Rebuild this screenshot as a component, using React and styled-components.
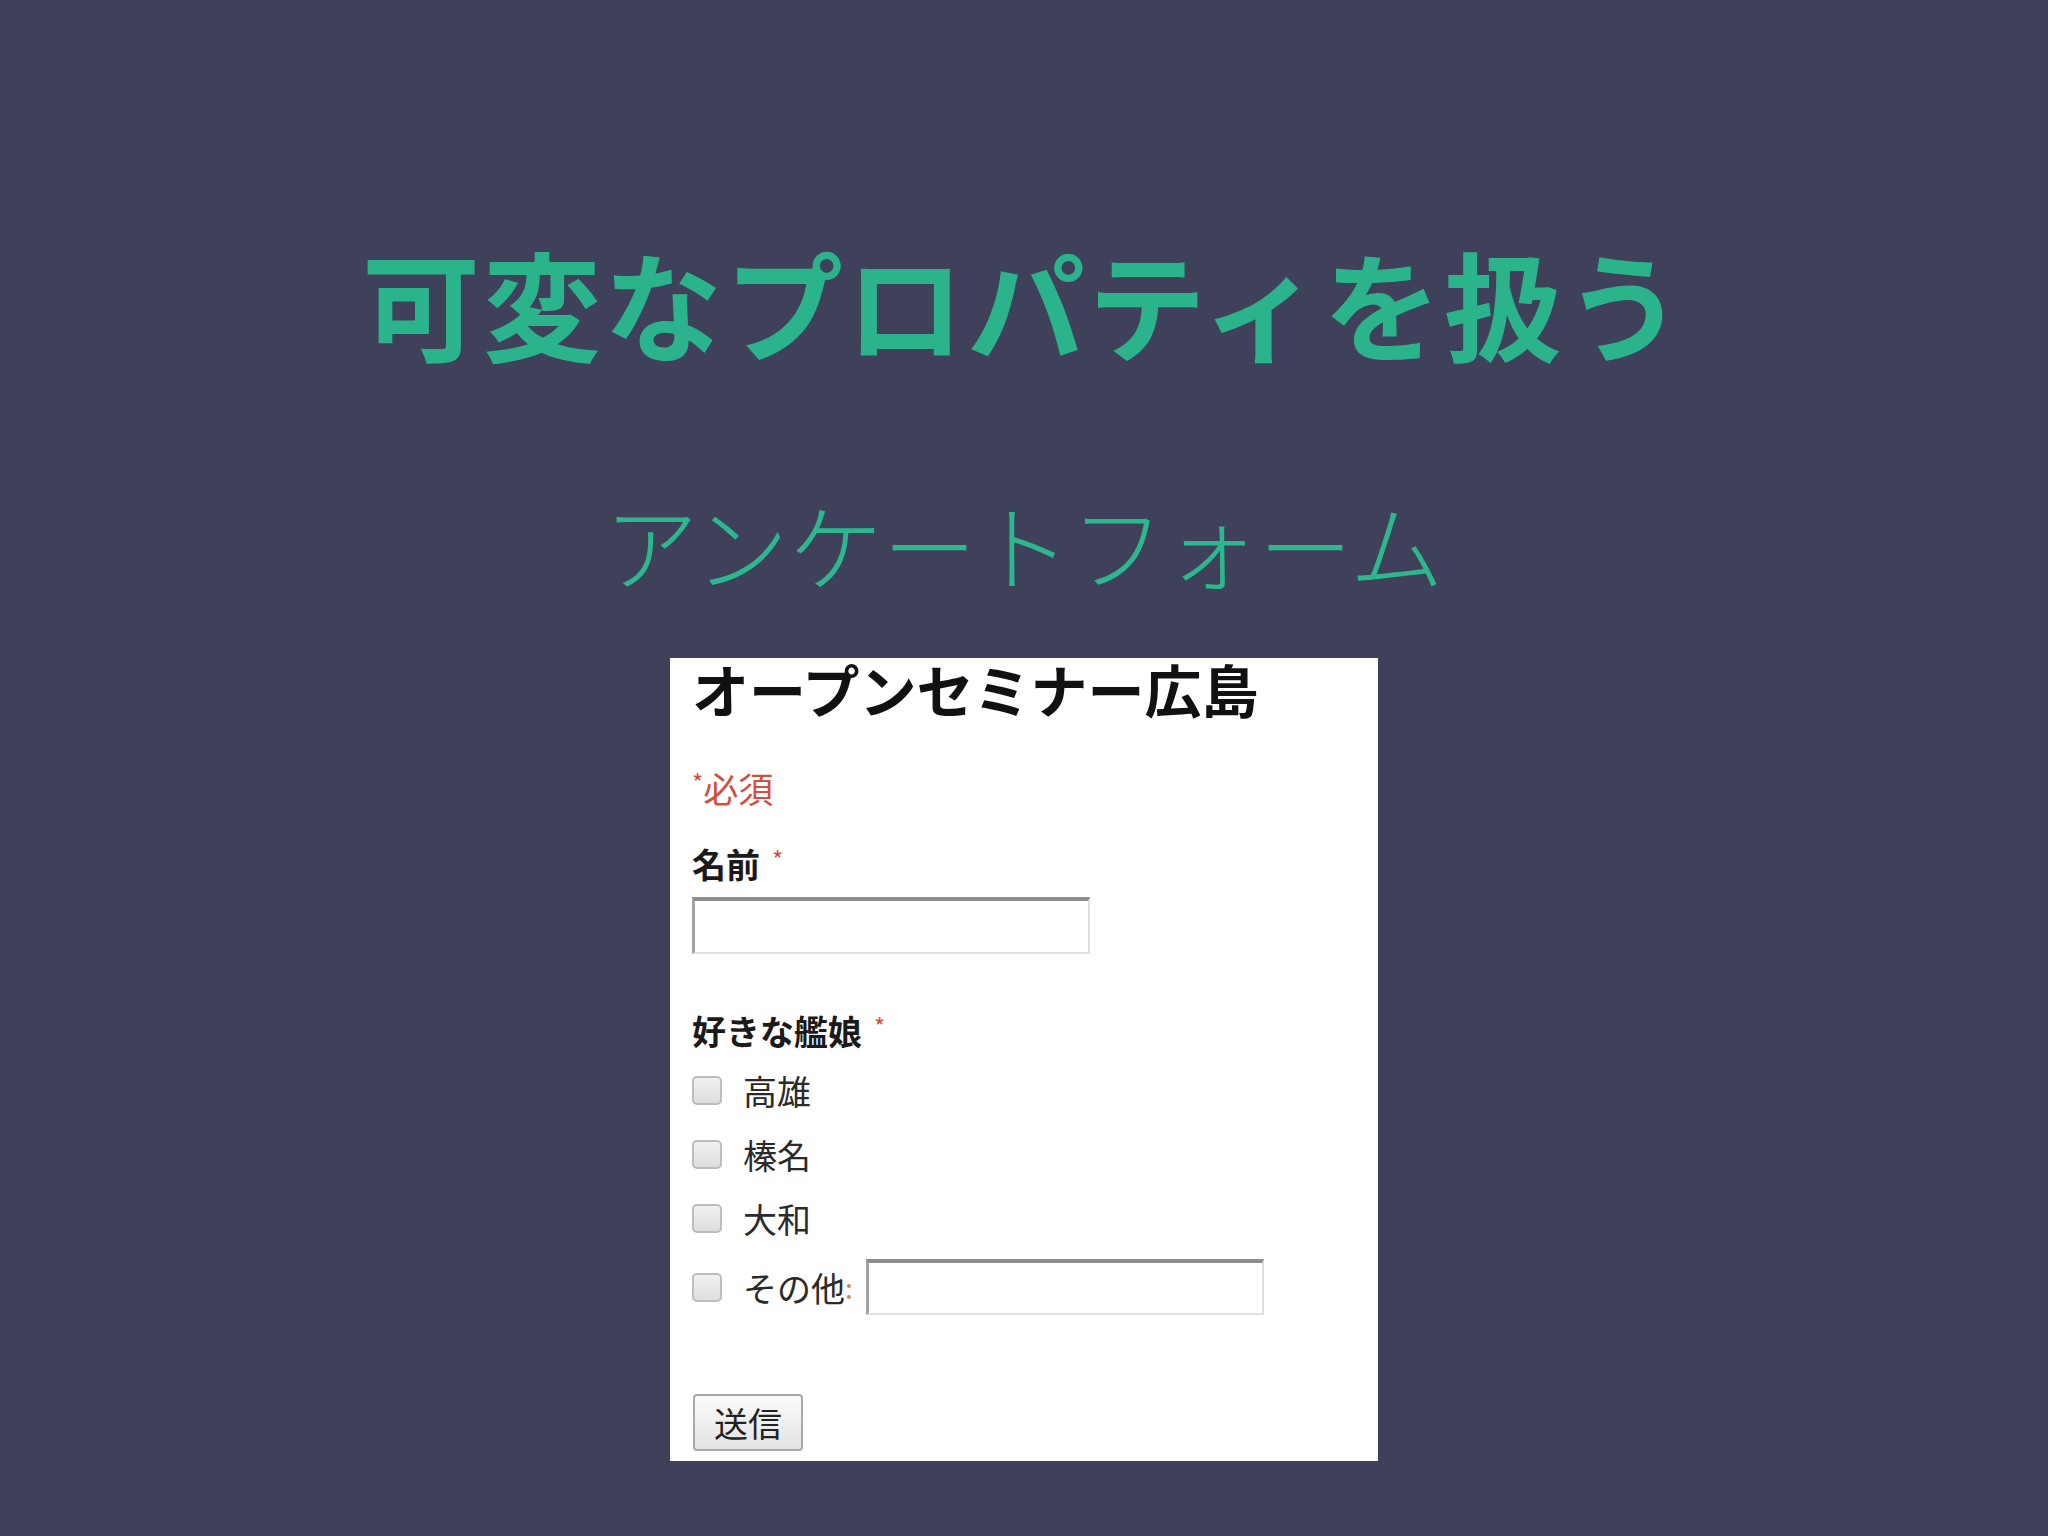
import React from "react";
import styled, { createGlobalStyle } from "styled-components";

const Global = createGlobalStyle`
  html, body { margin: 0; padding: 0; }
  body {
    background: #3f405a;
    font-family: "Noto Sans CJK JP", "Noto Sans", sans-serif;
  }
`;

const Page = styled.div`
  width: 2048px;
  height: 1536px;
  background: #3f405a;
  display: flex;
  flex-direction: column;
  align-items: center;
  box-sizing: border-box;
  padding-top: 243px;
`;

const Title = styled.h1`
  margin: 0;
  font-family: "Noto Sans CJK JP", sans-serif;
  font-weight: 700;
  font-size: 118px;
  line-height: 118px;
  letter-spacing: 3px;
  color: #2bb48b;
  white-space: nowrap;
`;

const Subtitle = styled.h2`
  margin: 134px 0 0;
  font-family: "Noto Sans CJK JP", sans-serif;
  font-weight: 300;
  font-size: 94px;
  line-height: 96px;
  color: #2db78f;
  white-space: nowrap;
`;

const Card = styled.form`
  margin-top: 67px;
  width: 708px;
  height: 803px;
  box-sizing: border-box;
  background: #ffffff;
  padding: 0 22px;
  display: flex;
  flex-direction: column;
  align-items: flex-start;
`;

const FormTitle = styled.div`
  margin-top: 2px;
  font-weight: 700;
  font-size: 57px;
  line-height: 57px;
  color: #111;
  white-space: nowrap;
`;

const Required = styled.div`
  margin-top: 53px;
  font-size: 35px;
  line-height: 35px;
  color: #d0503e;
  font-weight: 400;
`;

const Star = styled.span`
  display: inline-block;
  font-size: 24px;
  line-height: 20px;
  font-weight: 400;
  vertical-align: top;
  margin-top: ${(p) => p.$top || 2}px;
  margin-left: ${(p) => p.$left || 0}px;
  color: #d0503e;
`;

const Label = styled.div`
  margin-top: ${(p) => p.$mt}px;
  font-weight: 700;
  font-size: 34px;
  line-height: 34px;
  color: #1a1a1a;
  white-space: nowrap;
`;

const TextInput = styled.input`
  margin-top: ${(p) => p.$mt || 0}px;
  width: 398px;
  height: ${(p) => p.$h || 57}px;
  box-sizing: border-box;
  background: #fff;
  border-top: 4px solid #8c8c8c;
  border-left: 3px solid #a3a3a3;
  border-right: 2px solid #dedede;
  border-bottom: 2px solid #e2e2e2;
  padding: 0 8px;
  outline: none;
  font-size: 30px;
`;

const Options = styled.div`
  display: flex;
  flex-direction: column;
  margin-top: 22px;
`;

const Option = styled.label`
  display: flex;
  align-items: center;
  height: ${(p) => p.$h || 40}px;
  margin-top: ${(p) => p.$mt || 0}px;
  font-size: 34px;
  color: #2a2a2a;
  white-space: nowrap;
`;

const Check = styled.input.attrs({ type: "checkbox" })`
  appearance: none;
  -webkit-appearance: none;
  margin: 0 21px 0 0;
  width: 30px;
  height: 29px;
  box-sizing: border-box;
  border: 2px solid #bdbdbd;
  border-radius: 5px;
  background: linear-gradient(#f1f1f1, #dedede);
  flex: none;
`;

const Colon = styled.span`
  color: #d08a3e;
  margin-right: 13px;
  font-size: 28px;
`;

const Submit = styled.button`
  margin-top: 79px;
  margin-left: 1px;
  width: 110px;
  height: 57px;
  box-sizing: border-box;
  border: 2px solid #a8a8a8;
  border-radius: 4px;
  background: linear-gradient(#fbfbfb, #e3e3e3);
  font-family: "Noto Sans CJK JP", sans-serif;
  font-size: 34px;
  line-height: 1;
  color: #222;
  padding: 0;
`;

export default function App() {
  return (
    <>
      <Global />
      <Page>
        <Title>可変なプロパティを扱う</Title>
        <Subtitle>アンケートフォーム</Subtitle>
        <Card onSubmit={(e) => e.preventDefault()}>
          <FormTitle>オープンセミナー広島</FormTitle>
          <Required>
            <Star $top={2}>*</Star>必須
          </Required>
          <Label $mt={42}>
            名前<Star $left={12}>*</Star>
          </Label>
          <TextInput $mt={16} type="text" />
          <Label $mt={60}>
            好きな艦娘<Star $left={12}>*</Star>
          </Label>
          <Options>
            <Option>
              <Check />
              高雄
            </Option>
            <Option $mt={24}>
              <Check />
              榛名
            </Option>
            <Option $mt={24}>
              <Check />
              大和
            </Option>
            <Option $mt={21} $h={56}>
              <Check />
              その他<Colon>:</Colon>
              <TextInput $h={56} type="text" />
            </Option>
          </Options>
          <Submit type="submit">送信</Submit>
        </Card>
      </Page>
    </>
  );
}
